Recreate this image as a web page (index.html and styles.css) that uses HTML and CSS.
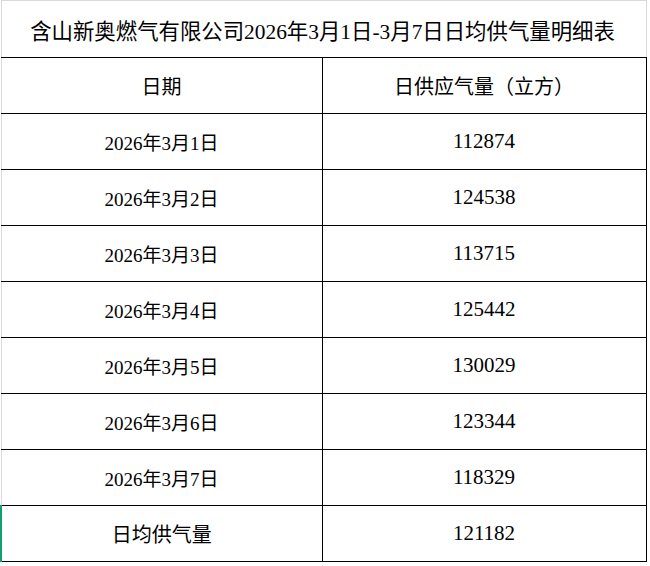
FILE: index.html
```html
<!DOCTYPE html>
<html lang="zh-CN">
<head>
<meta charset="utf-8">
<title>日均供气量明细表</title>
<link rel="stylesheet" href="styles.css">
</head>
<body>
<table class="sheet">
  <colgroup><col class="col-a"><col class="col-b"></colgroup>
  <tr class="title-row"><th colspan="2" class="title">含山新奥燃气有限公司2026年3月1日-3月7日日均供气量明细表</th></tr>
  <tr class="row head"><th>日期</th><th>日供应气量（立方）</th></tr>
  <tr class="row"><td class="date">2026年3月1日</td><td class="num">112874</td></tr>
  <tr class="row"><td class="date">2026年3月2日</td><td class="num">124538</td></tr>
  <tr class="row"><td class="date">2026年3月3日</td><td class="num">113715</td></tr>
  <tr class="row"><td class="date">2026年3月4日</td><td class="num">125442</td></tr>
  <tr class="row"><td class="date">2026年3月5日</td><td class="num">130029</td></tr>
  <tr class="row"><td class="date">2026年3月6日</td><td class="num">123344</td></tr>
  <tr class="row"><td class="date">2026年3月7日</td><td class="num">118329</td></tr>
  <tr class="row total"><td class="label selected">日均供气量</td><td class="num">121182</td></tr>
</table>
</body>
</html>
```
FILE: styles.css
```css
html, body {
  margin: 0;
  padding: 0;
  background: #ffffff;
}
body {
  font-family: "Liberation Serif", "Noto Sans CJK SC", serif;
  color: #000;
}
.sheet {
  border-collapse: collapse;
  table-layout: fixed;
  width: 645px;
}
.col-a { width: 321px; }
.col-b { width: 324px; }
.sheet th, .sheet td {
  border: 1px solid #000;
  padding: 0;
  text-align: center;
  vertical-align: middle;
  font-weight: normal;
  white-space: nowrap;
}
.title-row { height: 57px; }
.sheet .title {
  border-top: 1px solid #dadada;
  border-left: 1px solid #dadada;
  border-right: 1px solid #dadada;
  font-size: 21.4px;
  padding-right: 2px;
}
.row { height: 56px; }
.sheet .row > :first-child { border-left: 1px solid #dadada; }
.head th { font-size: 20px; }
.date { font-size: 19px; }
.num { font-size: 21px; padding-right: 12px; }
.label { font-size: 20px; }
.sheet .row > .selected { border-left: 2px solid #12a06c; }
```
